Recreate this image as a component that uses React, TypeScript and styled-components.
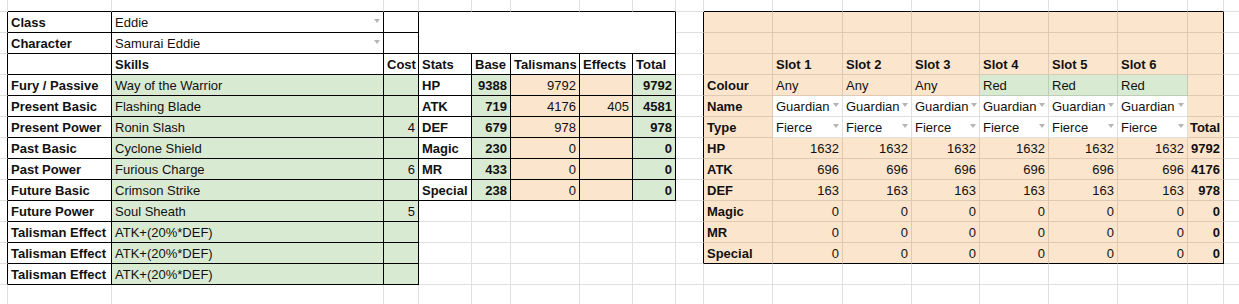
import * as React from 'react';
import styled, { createGlobalStyle } from 'styled-components';

const GlobalStyle = createGlobalStyle`
    body{
        margin: 0;
        padding: 0;
        background-color: #fff;
        overflow: hidden;
        font-family: 'Liberation Sans', Arial, sans-serif;
    }
`;

type Fill = 'white' | 'green' | 'orange';

type Spec = {
    text?: string;
    bold?: boolean;
    right?: boolean;
    fill?: Fill;
    drop?: boolean;
    cs?: number;
    rs?: number;
    skip?: boolean;
};

// column widths / row heights of the visible part of the sheet
const COLS = [8, 104, 272, 35, 53, 39, 69, 53, 43, 28, 69, 70, 69, 68, 69, 69, 70, 36, 40];
const ROWS = [12, ...Array(13).fill(21), 30];

const FILLS: Record<Fill, string> = {
    white: '#ffffff',
    green: '#d9ead3',
    orange: '#fce5cd',
};
const GRIDLINE = 'rgba(0, 0, 0, 0.12)';
const BORDER = '#000';

const Sheet = styled.div`
    display: grid;
    grid-template-columns: ${COLS.map((w) => w + 'px').join(' ')};
    grid-template-rows: ${ROWS.map((h) => h + 'px').join(' ')};
    width: max-content;
    color: #111;
`;

const Cell = styled.div<{
    $fill: Fill;
    $bold?: boolean;
    $right?: boolean;
    $drop?: boolean;
    $edgeR: boolean;
    $edgeB: boolean;
    $col: number;
    $row: number;
    $cs: number;
    $rs: number;
}>`
    grid-column: ${(p) => p.$col + 1} / span ${(p) => p.$cs};
    grid-row: ${(p) => p.$row + 1} / span ${(p) => p.$rs};
    display: flex;
    align-items: flex-end;
    justify-content: ${(p) => (p.$drop ? 'space-between' : p.$right ? 'flex-end' : 'flex-start')};
    gap: 3px;
    box-sizing: border-box;
    min-width: 0;
    padding: 0 3px 2px 3px;
    overflow: hidden;
    white-space: nowrap;
    background-color: ${(p) => FILLS[p.$fill]};
    border-right: 1px solid ${(p) => (p.$edgeR ? BORDER : GRIDLINE)};
    border-bottom: 1px solid ${(p) => (p.$edgeB ? BORDER : GRIDLINE)};
    font-size: 13px;
    line-height: 15px;
    font-weight: ${(p) => (p.$bold ? 700 : 400)};
`;

const Caret = styled.span`
    flex: none;
    align-self: center;
    width: 0;
    height: 0;
    border-left: 3.5px solid transparent;
    border-right: 3.5px solid transparent;
    border-top: 4px solid #b5b5b5;
`;

const NR = ROWS.length;
const NC = COLS.length;

// every cell of the left tables carries a black border
const leftBox = (r: number, c: number) =>
    (r >= 1 && r <= 13 && c >= 1 && c <= 3) || (r >= 1 && r <= 9 && c >= 4 && c <= 8);
// the slot table only has an outer border
const slotArea = (r: number, c: number) => r >= 1 && r <= 12 && c >= 10 && c <= 17;

const buildSheet = (): Spec[][] => {
    const g: Spec[][] = Array.from({ length: NR }, () => Array.from({ length: NC }, () => ({} as Spec)));

    // character & skills
    const labels = ['Class', 'Character', '', 'Fury / Passive', 'Present Basic', 'Present Power', 'Past Basic',
        'Past Power', 'Future Basic', 'Future Power', 'Talisman Effect', 'Talisman Effect', 'Talisman Effect'];
    const skills = ['Way of the Warrior', 'Flashing Blade', 'Ronin Slash', 'Cyclone Shield', 'Furious Charge',
        'Crimson Strike', 'Soul Sheath', 'ATK+(20%*DEF)', 'ATK+(20%*DEF)', 'ATK+(20%*DEF)'];
    const costs: Record<number, string> = { 6: '4', 8: '6', 10: '5' };
    labels.forEach((l, i) => { g[i + 1][1] = { text: l, bold: true }; });
    g[1][2] = { text: 'Eddie', drop: true };
    g[2][2] = { text: 'Samurai Eddie', drop: true };
    g[3][2] = { text: 'Skills', bold: true };
    g[3][3] = { text: 'Cost', bold: true };
    skills.forEach((s, i) => {
        g[i + 4][2] = { text: s, fill: 'green' };
        g[i + 4][3] = { text: costs[i + 4], fill: 'green', right: true };
    });

    // stats
    g[1][4] = { cs: 5, rs: 2 };
    for (let r = 1; r <= 2; r++) for (let c = 4; c <= 8; c++) if (r !== 1 || c !== 4) g[r][c] = { skip: true };
    ['Stats', 'Base', 'Talismans', 'Effects', 'Total'].forEach((h, i) => { g[3][4 + i] = { text: h, bold: true }; });
    const stats: [string, string, string, string, string][] = [
        ['HP', '9388', '9792', '', '9792'],
        ['ATK', '719', '4176', '405', '4581'],
        ['DEF', '679', '978', '', '978'],
        ['Magic', '230', '0', '', '0'],
        ['MR', '433', '0', '', '0'],
        ['Special', '238', '0', '', '0'],
    ];
    stats.forEach(([name, base, tal, eff, total], i) => {
        const r = i + 4;
        g[r][4] = { text: name, bold: true };
        g[r][5] = { text: base, bold: true, right: true, fill: 'green' };
        g[r][6] = { text: tal, right: true, fill: 'orange' };
        g[r][7] = { text: eff, right: true, fill: 'orange' };
        g[r][8] = { text: total, bold: true, right: true, fill: 'green' };
    });

    // talisman slots
    for (let r = 1; r <= 12; r++) for (let c = 10; c <= 17; c++) g[r][c] = { fill: 'orange' };
    for (let s = 0; s < 6; s++) {
        const c = 11 + s;
        g[3][c] = { text: `Slot ${s + 1}`, bold: true, fill: 'orange' };
        g[4][c] = s < 3 ? { text: 'Any', fill: 'orange' } : { text: 'Red', fill: 'green' };
        g[5][c] = { text: 'Guardian', drop: true, fill: 'white' };
        g[6][c] = { text: 'Fierce', drop: true, fill: 'white' };
    }
    g[4][10] = { text: 'Colour', bold: true, fill: 'orange' };
    g[5][10] = { text: 'Name', bold: true, fill: 'orange' };
    g[6][10] = { text: 'Type', bold: true, fill: 'orange' };
    g[6][17] = { text: 'Total', bold: true, right: true, fill: 'orange' };
    const slotStats: [string, string, string][] = [
        ['HP', '1632', '9792'],
        ['ATK', '696', '4176'],
        ['DEF', '163', '978'],
        ['Magic', '0', '0'],
        ['MR', '0', '0'],
        ['Special', '0', '0'],
    ];
    slotStats.forEach(([name, each, total], i) => {
        const r = i + 7;
        g[r][10] = { text: name, bold: true, fill: 'orange' };
        for (let c = 11; c <= 16; c++) g[r][c] = { text: each, right: true, fill: 'orange' };
        g[r][17] = { text: total, bold: true, right: true, fill: 'orange' };
    });

    return g;
};

const SHEET = buildSheet();

const App = () => {
    const cells: React.ReactNode[] = [];
    SHEET.forEach((row, r) =>
        row.forEach((spec, c) => {
            if (spec.skip) return;
            const cs = spec.cs ?? 1;
            const rs = spec.rs ?? 1;
            const edgeR = leftBox(r, c) || leftBox(r, c + cs) || slotArea(r, c) !== slotArea(r, c + cs);
            const edgeB = leftBox(r, c) || leftBox(r + rs, c) || slotArea(r, c) !== slotArea(r + rs, c);
            cells.push(
                <Cell
                    key={`${r}-${c}`}
                    $col={c}
                    $row={r}
                    $cs={cs}
                    $rs={rs}
                    $fill={spec.fill ?? 'white'}
                    $bold={spec.bold}
                    $right={spec.right}
                    $drop={spec.drop}
                    $edgeR={edgeR}
                    $edgeB={edgeB}
                >
                    {spec.text ? <span>{spec.text}</span> : null}
                    {spec.drop ? <Caret /> : null}
                </Cell>
            );
        })
    );

    return (
        <>
            <GlobalStyle />
            <Sheet>{cells}</Sheet>
        </>
    );
};

export default App;
